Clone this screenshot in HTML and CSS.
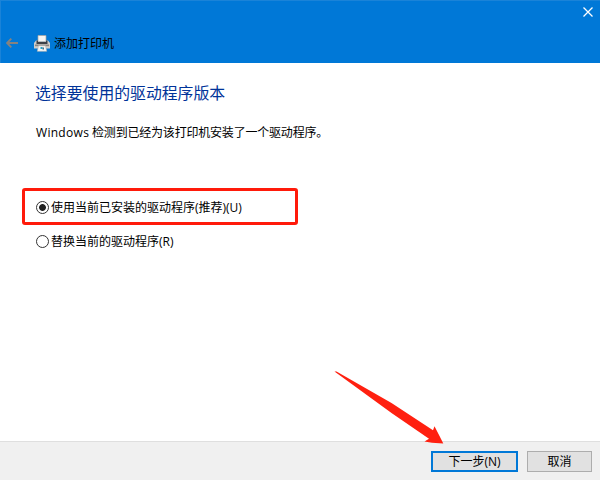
FILE: index.html
```
<!DOCTYPE html>
<html lang="zh-CN">
<head>
    <meta charset="UTF-8">
    <title>添加打印机</title>
    <link rel="stylesheet" href="styles.css">
</head>
<body>
    <div class="wizard">
        <header class="titlebar">
            <button type="button" class="close" aria-label="关闭">
                <svg width="10" height="10" viewBox="0 0 10 10"><path d="M0.5 0.5 9.5 9.5M9.5 0.5 0.5 9.5" stroke="#fff" stroke-width="1.3"/></svg>
            </button>
            <div class="caption">
                <svg class="back" width="12" height="10" viewBox="0 0 12 10"><path d="M12 5H1M5.3 0.7 1 5 5.3 9.3" fill="none" stroke="#85827f" stroke-width="1.9"/></svg>
                <svg class="printer" width="16" height="17" viewBox="0 0 16 17">
                    <path d="M4 0.5h8v6H4z" fill="#f5f5f3" stroke="#aaa59f" stroke-width="0.7"/>
                    <path d="M2 5.5H4v1h8v-1h2L16 8v5.5H0V8z" fill="#cfcdcb"/>
                    <path d="M2.5 5.5H4V7h8V5.5h1.5V9h-11z" fill="#3c4148"/>
                    <path d="M1 9.5h14v1.7H1z" fill="#8a8682"/>
                    <path d="M4.5 10.7h7l1.2 5.6H3.3z" fill="#f4f6f7" stroke="#b9b5b0" stroke-width="0.6"/>
                    <path d="M6.5 12h2v2h-2z" fill="#23a4c9"/>
                    <path d="M8.5 12.5h1.5v2H8.5z" fill="#41718a"/>
                </svg>
                <span>添加打印机</span>
            </div>
        </header>

        <main class="content">
            <h1>选择要使用的驱动程序版本</h1>
            <p><span class="latin">Windows</span> 检测到已经为该打印机安装了一个驱动程序。</p>

            <form class="options">
                <label class="option highlight">
                    <input type="radio" name="driver" checked>
                    <span>使用当前已安装的驱动程序(推荐)(U)</span>
                </label>
                <label class="option">
                    <input type="radio" name="driver">
                    <span>替换当前的驱动程序(R)</span>
                </label>
            </form>
        </main>

        <footer class="actions">
            <button type="button" class="btn primary">下一步(N)</button>
            <button type="button" class="btn">取消</button>
        </footer>

        <svg class="pointer" width="110" height="74" viewBox="0 0 110 74"><path d="M0.5 0.5 2.5 0.4 57.5 32 99 59.3 100.5 55.3 104.5 63 109.3 72.5 98 71.8 90.5 70.5 95 67.8 57.5 42z" fill="#ff2010"/></svg>
    </div>
</body>
</html>
```
FILE: styles.css
```
* {
    margin: 0;
    padding: 0;
    box-sizing: border-box;
}

body {
    font-family: "Open Sans", "Noto Sans CJK SC", sans-serif;
    font-size: 12px;
    color: #000;
}

.wizard {
    position: relative;
    display: flex;
    flex-direction: column;
    width: 600px;
    height: 480px;
    background-color: #fff;
    overflow: hidden;
}

.titlebar {
    display: flex;
    flex-direction: column;
    height: 63px;
    background-color: #0078d7;
    border-top: 1px solid #1a83d8;
    border-left: 1px solid #1a83d8;
}

.close {
    align-self: flex-end;
    width: 10px;
    height: 10px;
    margin: 6px 7px 0 0;
    border: none;
    background: none;
}

.close svg {
    display: block;
}

.caption {
    display: flex;
    align-items: center;
    height: 20px;
    margin-top: 16px;
    padding-left: 5px;
}

.caption span {
    padding-top: 1px;
    line-height: 21px;
}

.printer {
    margin: 0 4px 0 16px;
}

.content {
    flex: 1;
    padding: 18px 22px 0;
}

h1 {
    padding-left: 13px;
    font-size: 15.85px;
    font-weight: normal;
    line-height: 24px;
    color: #003399;
}

p {
    margin-top: 18px;
    padding-left: 14px;
    line-height: 20px;
    letter-spacing: -0.2px;
}

.latin {
    letter-spacing: 0.3px;
}

.options {
    margin-top: 45px;
}

.option {
    display: flex;
    align-items: center;
    width: 276px;
    height: 31px;
    padding-left: 14px;
    line-height: 20px;
}

.option span {
    padding-top: 2px;
}

.option.highlight {
    height: 37px;
    padding: 1px 0 0 11px;
    border: 3px solid #ff1a0a;
    border-radius: 3px;
}

.option input {
    appearance: none;
    width: 13px;
    height: 13px;
    margin: 1px 2px 0 0;
    border: 1px solid #333;
    border-radius: 50%;
    background-color: #fff;
}

.option input:checked {
    background-image: radial-gradient(circle, #222 3px, #fff 3.8px);
}

.actions {
    display: flex;
    justify-content: flex-end;
    gap: 9px;
    height: 39px;
    padding: 9px 8px 0 0;
    background-color: #f0f0f0;
    border-top: 1px solid #dfdfdf;
}

.btn {
    width: 65px;
    height: 21px;
    border: 1px solid #adadad;
    background-color: #e1e1e1;
    font-family: inherit;
    font-size: 12px;
    line-height: 19px;
    color: #000;
}

.btn.primary {
    width: 87px;
    border: 2px solid #0078d7;
    line-height: 17px;
}

/* red arrow that lies over the page, pointing at the next button */
.pointer {
    position: absolute;
    left: 334px;
    top: 371px;
}
```
